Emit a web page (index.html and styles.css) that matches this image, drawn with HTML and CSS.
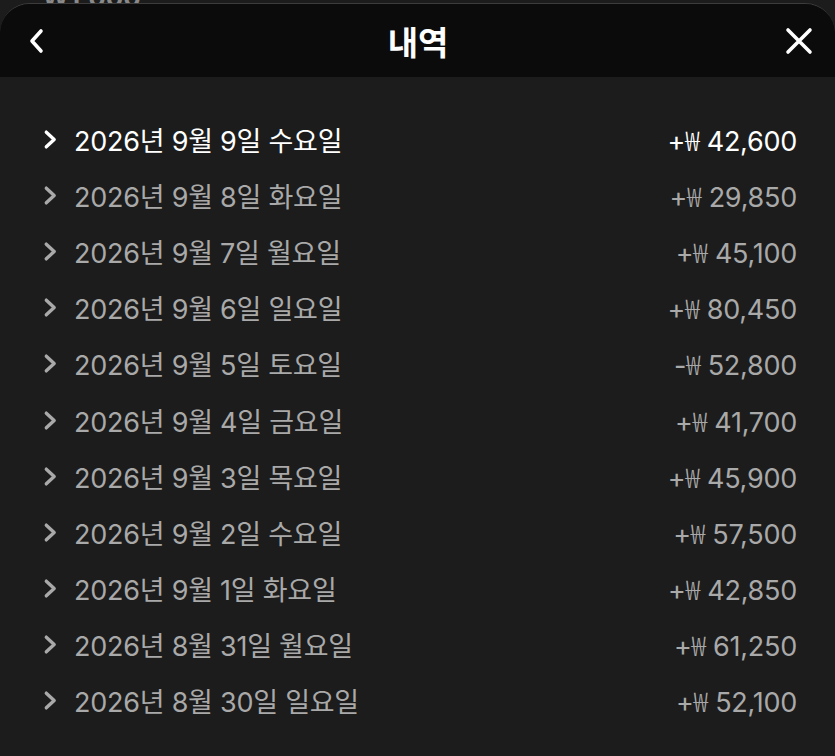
FILE: index.html
```html
<!DOCTYPE html>
<html lang="ko">
<head>
<meta charset="utf-8">
<link rel="stylesheet" href="styles.css">
</head>
<body>
<div class="page">
  <div class="behind">₩1,000</div>
  <div class="sheet">
    <header class="sheet-head">
      <button class="icon-btn" aria-label="뒤로">
        <svg width="22" height="28" viewBox="0 0 22 28"><path d="M15 4 L6 14 L15 24" fill="none" stroke="#fff" stroke-width="3.6" stroke-linecap="round" stroke-linejoin="round"/></svg>
      </button>
      <h1 class="title">내역</h1>
      <button class="icon-btn" aria-label="닫기">
        <svg width="28" height="28" viewBox="0 0 28 28"><path d="M3 3 L25 25 M25 3 L3 25" fill="none" stroke="#fff" stroke-width="3.6" stroke-linecap="round"/></svg>
      </button>
    </header>
    <ul class="list">
      <li class="row active"><svg class="chev" viewBox="0 0 14 20"><path d="M3 3 L10.5 10 L3 17"/></svg><span class="date">2026년 9월 9일 수요일</span><span class="amt">+<span class="won">₩</span> 42,600</span></li>
      <li class="row"><svg class="chev" viewBox="0 0 14 20"><path d="M3 3 L10.5 10 L3 17"/></svg><span class="date">2026년 9월 8일 화요일</span><span class="amt">+<span class="won">₩</span> 29,850</span></li>
      <li class="row"><svg class="chev" viewBox="0 0 14 20"><path d="M3 3 L10.5 10 L3 17"/></svg><span class="date">2026년 9월 7일 월요일</span><span class="amt">+<span class="won">₩</span> 45,100</span></li>
      <li class="row"><svg class="chev" viewBox="0 0 14 20"><path d="M3 3 L10.5 10 L3 17"/></svg><span class="date">2026년 9월 6일 일요일</span><span class="amt">+<span class="won">₩</span> 80,450</span></li>
      <li class="row"><svg class="chev" viewBox="0 0 14 20"><path d="M3 3 L10.5 10 L3 17"/></svg><span class="date">2026년 9월 5일 토요일</span><span class="amt">-<span class="won">₩</span> 52,800</span></li>
      <li class="row"><svg class="chev" viewBox="0 0 14 20"><path d="M3 3 L10.5 10 L3 17"/></svg><span class="date">2026년 9월 4일 금요일</span><span class="amt">+<span class="won">₩</span> 41,700</span></li>
      <li class="row"><svg class="chev" viewBox="0 0 14 20"><path d="M3 3 L10.5 10 L3 17"/></svg><span class="date">2026년 9월 3일 목요일</span><span class="amt">+<span class="won">₩</span> 45,900</span></li>
      <li class="row"><svg class="chev" viewBox="0 0 14 20"><path d="M3 3 L10.5 10 L3 17"/></svg><span class="date">2026년 9월 2일 수요일</span><span class="amt">+<span class="won">₩</span> 57,500</span></li>
      <li class="row"><svg class="chev" viewBox="0 0 14 20"><path d="M3 3 L10.5 10 L3 17"/></svg><span class="date">2026년 9월 1일 화요일</span><span class="amt">+<span class="won">₩</span> 42,850</span></li>
      <li class="row"><svg class="chev" viewBox="0 0 14 20"><path d="M3 3 L10.5 10 L3 17"/></svg><span class="date">2026년 8월 31일 월요일</span><span class="amt">+<span class="won">₩</span> 61,250</span></li>
      <li class="row"><svg class="chev" viewBox="0 0 14 20"><path d="M3 3 L10.5 10 L3 17"/></svg><span class="date">2026년 8월 30일 일요일</span><span class="amt">+<span class="won">₩</span> 52,100</span></li>
    </ul>
  </div>
</div>
</body>
</html>
```
FILE: styles.css
```css
* { box-sizing: border-box; }
html, body {
  margin: 0;
  padding: 0;
  background: #1c1c1c;
  font-family: Inter, "Noto Sans CJK KR", sans-serif;
  overflow: hidden;
}
.page {
  position: relative;
  width: 835px;
  height: 756px;
  background: #1c1c1c;
}
.behind {
  position: absolute;
  top: -18px;
  left: 42px;
  color: #8a8a8a;
  font-size: 26px;
  font-weight: 700;
}
.sheet {
  position: absolute;
  top: 3px;
  left: 0;
  right: 0;
  bottom: 0;
  background: #1c1c1c;
  border-radius: 30px 30px 0 0;
  border-top: 1px solid #3c3c3c;
  overflow: hidden;
}
.sheet-head {
  height: 73px;
  background: #0b0b0b;
  display: flex;
  align-items: center;
  justify-content: space-between;
  padding: 0 22px 0 23px;
}
.icon-btn {
  background: none;
  border: 0;
  padding: 0;
  width: 28px;
  height: 28px;
  display: flex;
  align-items: center;
  justify-content: center;
}
.title {
  margin: 0;
  color: #fff;
  font-size: 33px;
  font-weight: 700;
  letter-spacing: 0;
}
.list {
  list-style: none;
  margin: 0;
  padding: 34px 38px 0 43px;
}
.row {
  display: flex;
  align-items: center;
  height: 56.2px;
  color: #a9a9a9;
  font-size: 27px;
  letter-spacing: -0.25px;
}
.row.active { color: #fff; }
.chev {
  width: 15px;
  height: 21px;
  margin-right: 16px;
  flex: none;
}
.chev path {
  fill: none;
  stroke: currentColor;
  stroke-width: 3.2;
  stroke-linecap: round;
  stroke-linejoin: round;
}
.date { flex: 1; }
.amt { text-align: right; }
.won {
  font-family: "Noto Sans CJK KR", sans-serif;
  font-weight: 300;
}
```
